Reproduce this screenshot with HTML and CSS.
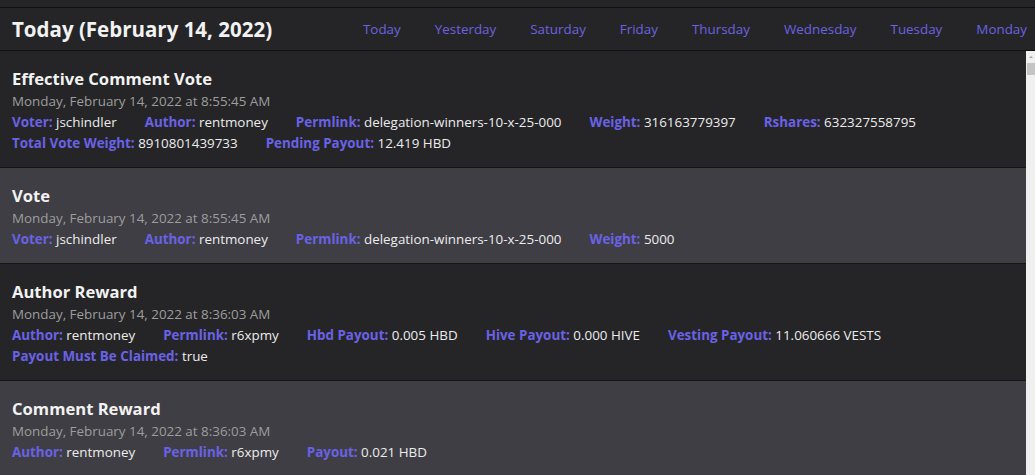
FILE: index.html
```html
<!DOCTYPE html>
<html lang="en">
<head>
    <meta charset="UTF-8">
    <meta name="viewport" content="width=device-width, initial-scale=1.0">
    <title>Account History</title>
    <link rel="stylesheet" href="styles.css">
</head>
<body>
    <div class="header">
        <h1>Today (February 14, 2022)</h1>
        <nav class="days">
            <a href="#">Today</a>
            <a href="#">Yesterday</a>
            <a href="#">Saturday</a>
            <a href="#">Friday</a>
            <a href="#">Thursday</a>
            <a href="#">Wednesday</a>
            <a href="#">Tuesday</a>
            <a href="#">Monday</a>
        </nav>
    </div>
    <div class="main">
        <div class="ops">
            <div class="op">
                <h2>Effective Comment Vote</h2>
                <div class="time">Monday, February 14, 2022 at 8:55:45 AM</div>
                <div class="fields">
                    <span><b>Voter:</b> jschindler</span>
                    <span><b>Author:</b> rentmoney</span>
                    <span><b>Permlink:</b> delegation-winners-10-x-25-000</span>
                    <span><b>Weight:</b> 316163779397</span>
                    <span><b>Rshares:</b> 632327558795</span>
                    <span class="break"></span>
                    <span><b>Total Vote Weight:</b> 8910801439733</span>
                    <span><b>Pending Payout:</b> 12.419 HBD</span>
                </div>
            </div>
            <div class="op">
                <h2>Vote</h2>
                <div class="time">Monday, February 14, 2022 at 8:55:45 AM</div>
                <div class="fields">
                    <span><b>Voter:</b> jschindler</span>
                    <span><b>Author:</b> rentmoney</span>
                    <span><b>Permlink:</b> delegation-winners-10-x-25-000</span>
                    <span><b>Weight:</b> 5000</span>
                </div>
            </div>
            <div class="op">
                <h2>Author Reward</h2>
                <div class="time">Monday, February 14, 2022 at 8:36:03 AM</div>
                <div class="fields">
                    <span><b>Author:</b> rentmoney</span>
                    <span><b>Permlink:</b> r6xpmy</span>
                    <span><b>Hbd Payout:</b> 0.005 HBD</span>
                    <span><b>Hive Payout:</b> 0.000 HIVE</span>
                    <span><b>Vesting Payout:</b> 11.060666 VESTS</span>
                    <span class="break"></span>
                    <span><b>Payout Must Be Claimed:</b> true</span>
                </div>
            </div>
            <div class="op">
                <h2>Comment Reward</h2>
                <div class="time">Monday, February 14, 2022 at 8:36:03 AM</div>
                <div class="fields">
                    <span><b>Author:</b> rentmoney</span>
                    <span><b>Permlink:</b> r6xpmy</span>
                    <span><b>Payout:</b> 0.021 HBD</span>
                </div>
            </div>
        </div>
        <div class="scrollbar">
            <div class="arrow"></div>
            <div class="thumb"></div>
        </div>
    </div>
</body>
</html>
```

FILE: styles.css
```css
body {
    font-family: 'Open Sans', sans-serif;
    margin: 0;
    padding: 0;
    background-color: #252527;
    color: #ececec;
    height: 475px;
    display: flex;
    flex-direction: column;
    overflow: hidden;
}

.header {
    display: flex;
    align-items: center;
    height: 42px;
    margin-top: 7px;
    padding: 0 8px 0 12px;
    border-top: 1px solid #111;
    border-bottom: 1px solid #111;
}

h1 {
    margin: 0;
    font-size: 20.5px;
    font-weight: 700;
    color: #f2f2f2;
}

.days {
    margin-left: auto;
    display: flex;
    gap: 34px;
}

.days a {
    color: #6a63e0;
    text-decoration: none;
    font-size: 13.4px;
}

.main {
    flex: 1;
    display: flex;
    min-height: 0;
}

.ops {
    flex: 1;
    overflow: hidden;
}

.scrollbar {
    width: 9px;
    background-color: #f0f0f0;
    display: flex;
    flex-direction: column;
    align-items: center;
}

.arrow {
    margin-top: 5px;
    width: 0;
    height: 0;
    border-left: 2px solid transparent;
    border-right: 2px solid transparent;
    border-bottom: 2px solid #a3a3a3;
}

.thumb {
    margin-top: 5px;
    width: 8px;
    height: 12px;
    background-color: #c4c4c4;
}

.op {
    padding: 16px 12px 13px;
    border-bottom: 1px solid #151515;
}

.op:nth-child(even) {
    background-color: #3f3e44;
}

h2 {
    margin: 0;
    font-size: 16.6px;
    line-height: 24px;
    font-weight: 700;
    color: #f2f2f2;
}

.time {
    font-size: 13.4px;
    line-height: 21px;
    color: #9d9d9d;
}

.fields {
    display: flex;
    flex-wrap: wrap;
    column-gap: 28px;
    font-size: 13.4px;
    line-height: 21px;
}

.fields b {
    color: #6a62e6;
    font-weight: 700;
}

.break {
    flex-basis: 100%;
    height: 0;
}
```
